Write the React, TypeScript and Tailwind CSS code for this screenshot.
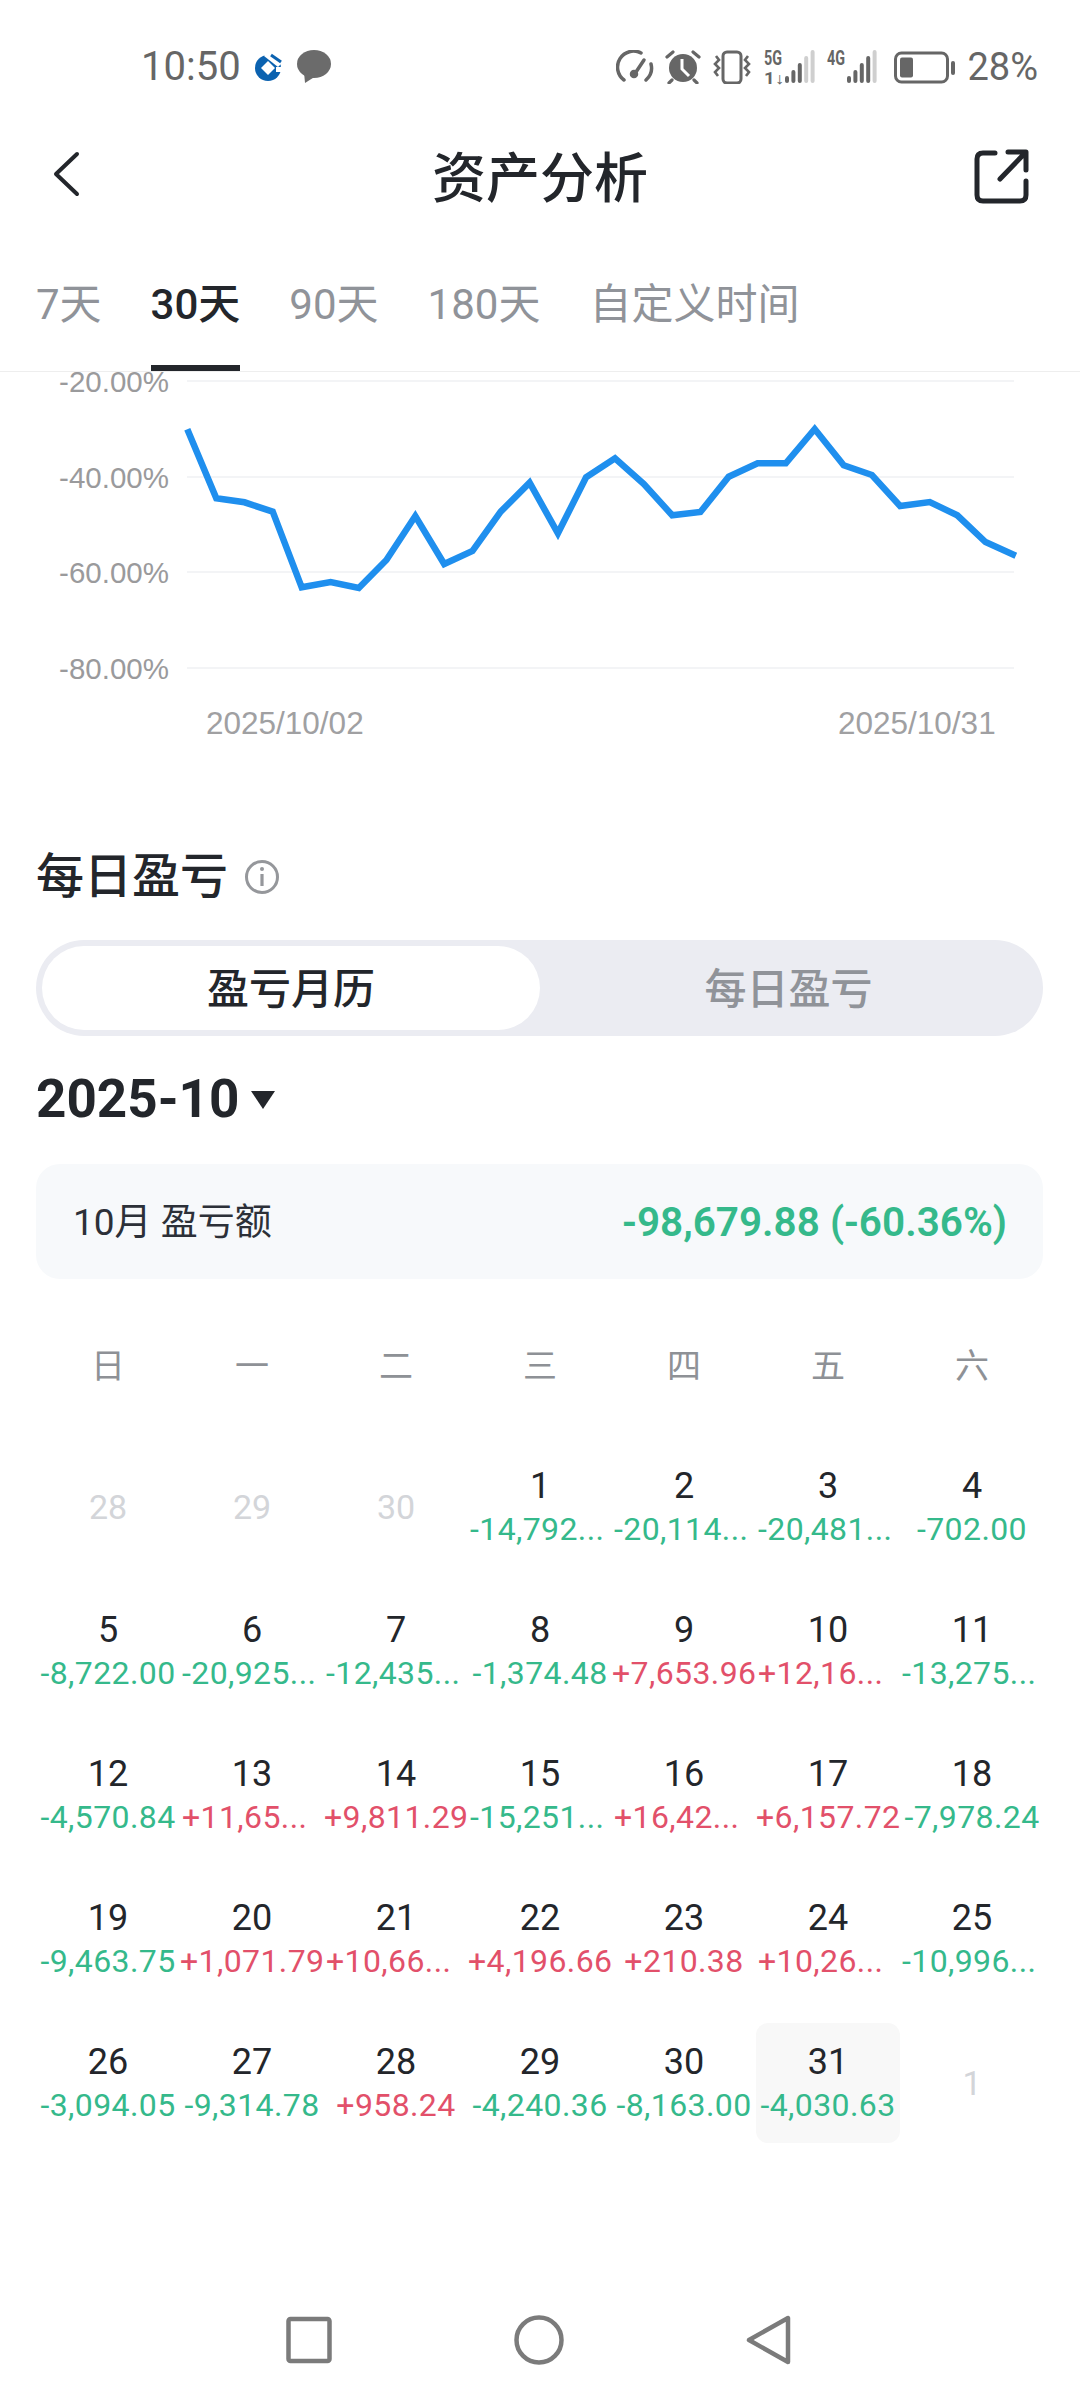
import React from "react";

const CJK = "font-['Roboto','Noto_Sans_CJK_SC',sans-serif]";

const pts: [number, number][] = [
  [272, 208], [314, 415], [355, 427], [396, 455], [438, 682], [480, 666], [521, 684], [561, 600], [603, 468], [645, 612],
  [686, 573], [727, 455], [769, 368], [810, 520], [851, 352], [893, 295], [935, 372], [976, 466], [1017, 456], [1058, 350],
  [1100, 310], [1141, 310], [1183, 207], [1225, 316], [1266, 345], [1307, 438], [1350, 426], [1390, 466], [1431, 546], [1475, 587],
];
const linePoints = pts.map(([u, v]) => `${(u / 1.452).toFixed(1)},${(v / 3 - 12).toFixed(1)}`).join(" ");

function Chart() {
  const grid = [
    { y: 9, t: "-20.00%" },
    { y: 105, t: "-40.00%" },
    { y: 200, t: "-60.00%" },
    { y: 296, t: "-80.00%" },
  ];
  return (
    <svg width="1080" height="400" viewBox="0 0 1080 400" className="block overflow-visible">
      {grid.map((g) => (
        <g key={g.y}>
          <line x1="187" x2="1014" y1={g.y} y2={g.y} stroke="#f3f4f6" strokeWidth="2" />
          <text x="169" y={g.y + 11} textAnchor="end" fontFamily="Liberation Sans, sans-serif" fontSize="29.5" fill="#9a9a9c">
            {g.t}
          </text>
        </g>
      ))}
      <polyline points={linePoints} fill="none" stroke="#1f8fee" strokeWidth="6.5" strokeLinejoin="miter" />
      <text x="206" y="362" fontFamily="Liberation Sans, sans-serif" fontSize="31.5" fill="#a0a0a2">2025/10/02</text>
      <text x="838" y="362" fontFamily="Liberation Sans, sans-serif" fontSize="31.5" fill="#a0a0a2">2025/10/31</text>
    </svg>
  );
}

function Bars({ grey, x0 }: { grey: number; x0: number }) {
  const hs = [7, 13, 20, 27, 33];
  return (
    <>
      {hs.map((h, i) => (
        <rect key={i} x={x0 + i * 6.4} y={33 - h} width="4" height={h} rx="2" fill={i >= 5 - grey ? "#cfcfcf" : "#666"} />
      ))}
    </>
  );
}

function StatusIcons() {
  return (
    <div className="flex items-center">
      <svg width="38" height="34" viewBox="0 0 38 34" fill="none" stroke="#666" strokeWidth="3.5" strokeLinecap="round">
        <path d="M8 30 A16 16 0 0 1 25 3" />
        <path d="M35 14 A16 16 0 0 1 30 30" />
        <path d="M28 10 L20 22" />
        <circle cx="18" cy="24" r="2.5" fill="#666" />
      </svg>
      <svg width="36" height="34" viewBox="0 0 36 34" className="ml-[11px]">
        <circle cx="18" cy="18" r="14" fill="#666" />
        <path d="M17 9 V19 L24 26" stroke="#fff" strokeWidth="3" fill="none" />
        <path d="M2 7 L8 2 M34 7 L28 2 M7 30 L4 33 M29 30 L32 33" stroke="#666" strokeWidth="3.2" strokeLinecap="round" />
      </svg>
      <svg width="40" height="34" viewBox="0 0 40 34" fill="none" stroke="#666" className="ml-[11px]">
        <rect x="11" y="2" width="18" height="31" rx="4" strokeWidth="3" />
        <path d="M4 6 L7 10 L3 14 L7 18 L3 22 L6 26" strokeWidth="2.6" />
        <path d="M36 6 L33 10 L37 14 L33 18 L37 22 L34 26" strokeWidth="2.6" />
      </svg>
      <svg width="53" height="34" viewBox="0 0 53 34" className="ml-[12px] overflow-visible">
        <text x="0" y="15" fontFamily="Roboto, sans-serif" fontWeight="700" fontSize="20" fill="#666" textLength="18" lengthAdjust="spacingAndGlyphs">5G</text>
        <text x="0" y="34" fontFamily="Roboto, sans-serif" fontWeight="700" fontSize="16" fill="#666" textLength="20" lengthAdjust="spacingAndGlyphs">1↓</text>
        <Bars grey={2} x0={21} />
      </svg>
      <svg width="54" height="34" viewBox="0 0 54 34" className="ml-[10px] overflow-visible">
        <text x="0" y="15" fontFamily="Roboto, sans-serif" fontWeight="700" fontSize="20" fill="#666" textLength="18" lengthAdjust="spacingAndGlyphs">4G</text>
        <Bars grey={1} x0={20} />
      </svg>
      <svg width="62" height="34" viewBox="0 0 62 34" className="ml-[13px]">
        <rect x="1.5" y="3" width="52" height="29" rx="6" fill="none" stroke="#666" strokeWidth="3" />
        <rect x="6" y="7.5" width="13" height="20" rx="2" fill="#666" />
        <rect x="57" y="11" width="4" height="14" rx="2" fill="#666" />
      </svg>
      <span className="ml-[11px] text-[38px] leading-none text-[#666] font-['Roboto',sans-serif]">28%</span>
    </div>
  );
}

function StatusBar() {
  return (
    <div className="flex h-[132px] items-center justify-between pl-[141px] pr-[42px] pt-[2px]">
      <div className="flex items-center">
        <span className="text-[40px] leading-none text-[#666] font-['Roboto',sans-serif]">10:50</span>
        <svg width="28" height="30" viewBox="0 0 28 30" className="ml-[13px]">
          <circle cx="14" cy="16" r="13" fill="#0b62b0" />
          <path d="M14 9 L21 16 L14 23 L7 16 Z" fill="#fff" />
          <path d="M13 0 L28 11 L24 15 L10 4 Z" fill="#fff" />
          <path d="M17 3 L27 10" stroke="#0b62b0" strokeWidth="3" />
          <path d="M22 15 H28 V20 H22 Z" fill="#fff" />
        </svg>
        <svg width="36" height="34" viewBox="0 0 36 34" className="ml-[14px]">
          <ellipse cx="18" cy="14" rx="17" ry="14" fill="#6b6b6b" />
          <path d="M8 22 L9 33 L20 26 Z" fill="#6b6b6b" />
        </svg>
      </div>
      <StatusIcons />
    </div>
  );
}

function NavBar() {
  return (
    <div className="flex h-[92px] items-center pl-[52px] pr-[49px]">
      <div className="flex flex-1 items-center">
        <svg width="28" height="46" viewBox="0 0 28 46" fill="none" stroke="#23262b" strokeWidth="4" strokeLinecap="round" strokeLinejoin="round" className="mt-[-8px]">
          <path d="M25 3 L4 23 L25 43" />
        </svg>
      </div>
      <span className="ml-[-3px] pt-[4px] text-[54px] font-medium leading-none text-[#23262b]">资产分析</span>
      <div className="flex flex-1 items-center justify-end">
        <svg width="58" height="58" viewBox="0 0 58 58" fill="none" stroke="#23262b" strokeWidth="5" strokeLinecap="round" strokeLinejoin="round" className="mt-[-2px]">
          <path d="M22 5 H10 Q4 5 4 11 V47 Q4 53 10 53 H47 Q53 53 53 47 V33" />
          <path d="M27 31 L52 5 M35 4 H53 V22" />
        </svg>
      </div>
    </div>
  );
}

function Tabs() {
  const tabs = ["7天", "30天", "90天", "180天", "自定义时间"];
  return (
    <div className="flex h-[148px] gap-[49px] border-b border-[#eeeeee] pl-[36px]">
      {tabs.map((t, i) => (
        <div
          key={t}
          className={
            i === 1
              ? "h-[147px] border-b-[6px] border-[#23262b] pt-[56px] text-[42px] font-medium leading-[50px] text-[#23262b]"
              : "h-[147px] pt-[56px] text-[42px] leading-[50px] text-[#909399]"
          }
        >
          {t}
        </div>
      ))}
    </div>
  );
}

type Cell = { d: string; v?: string; off?: boolean; sel?: boolean };
const c = (d: number, v: string, sel = false): Cell => ({ d: String(d), v, sel });
const off = (d: number): Cell => ({ d: String(d), off: true });

const cells: Cell[] = [
  off(28), off(29), off(30), c(1, "-14,792..."), c(2, "-20,114..."), c(3, "-20,481..."), c(4, "-702.00"),
  c(5, "-8,722.00"), c(6, "-20,925..."), c(7, "-12,435..."), c(8, "-1,374.48"), c(9, "+7,653.96"), c(10, "+12,16..."), c(11, "-13,275..."),
  c(12, "-4,570.84"), c(13, "+11,65..."), c(14, "+9,811.29"), c(15, "-15,251..."), c(16, "+16,42..."), c(17, "+6,157.72"), c(18, "-7,978.24"),
  c(19, "-9,463.75"), c(20, "+1,071.79"), c(21, "+10,66..."), c(22, "+4,196.66"), c(23, "+210.38"), c(24, "+10,26..."), c(25, "-10,996..."),
  c(26, "-3,094.05"), c(27, "-9,314.78"), c(28, "+958.24"), c(29, "-4,240.36"), c(30, "-8,163.00"), c(31, "-4,030.63", true), off(1),
];

function DayCell({ cell }: { cell: Cell }) {
  if (cell.off) {
    return (
      <div className="flex h-[120px] items-center justify-center text-[34px] text-[#d3d5d9]">{cell.d}</div>
    );
  }
  const pos = cell.v!.startsWith("+");
  const cut = cell.v!.endsWith("...");
  return (
    <div className={cell.sel ? "flex h-[120px] flex-col justify-center rounded-[12px] bg-[#f8f8f8]" : "flex h-[120px] flex-col justify-center"}>
      <div className="h-[44px] pt-[1px] text-center text-[36px] leading-[44px] text-[#23262b]">{cell.d}</div>
      <div
        className={
          (cut ? "pl-[2px] text-left " : "text-center ") +
          (pos ? "text-[#e2506a] " : "text-[#35b98b] ") +
          "h-[44px] whitespace-nowrap text-[32px] leading-[44px] tracking-[0.4px]"
        }
      >
        {cell.v}
      </div>
    </div>
  );
}

export default function App() {
  return (
    <div className={"h-[2400px] w-[1080px] overflow-hidden bg-white " + CJK}>
      <StatusBar />
      <NavBar />
      <Tabs />
      <Chart />

      <div className="mt-[73px] px-[36px]">
        <div className="flex h-[64px] items-center">
          <span className="text-[48px] font-medium leading-none text-[#23262b]">每日盈亏</span>
          <svg width="36" height="36" viewBox="0 0 36 36" fill="none" stroke="#95979b" strokeWidth="3" className="ml-[16px]">
            <circle cx="18" cy="18" r="15.5" />
            <path d="M18 15 V27" strokeWidth="3.2" />
            <circle cx="18" cy="10" r="2" fill="#95979b" stroke="none" />
          </svg>
        </div>

        <div className="mt-[31px] flex h-[96px] w-[1007px] rounded-full bg-[#ebecf2] p-[6px]">
          <div className="flex w-[498px] items-center justify-center rounded-full bg-white pt-[2px] text-[42px] font-medium text-[#23262b]">
            盈亏月历
          </div>
          <div className="flex flex-1 items-center justify-center pt-[2px] text-[42px] font-medium text-[#909399]">每日盈亏</div>
        </div>

        <div className="mt-[32px] flex h-[60px] items-center pt-[3px]">
          <span className="text-[53px] font-bold leading-none text-[#23262b]">2025-10</span>
          <svg width="24" height="18" viewBox="0 0 24 18" className="ml-[12px]">
            <path d="M0 0 H24 L12 18 Z" fill="#23262b" />
          </svg>
        </div>

        <div className="mt-[36px] flex h-[115px] w-[1007px] items-center justify-between rounded-[24px] bg-[#f7f9fb] pl-[37px] pr-[36px]">
          <span className="pt-[2px] text-[37px] leading-none text-[#2c3038]">10月 盈亏额</span>
          <span className="pt-[2px] text-[40.5px] font-semibold leading-none text-[#35b98b]">-98,679.88 (-60.36%)</span>
        </div>

        <div className="mt-[62px] grid h-[50px] grid-cols-7 text-center text-[34px] leading-[50px] text-[#8e9196]">
          {["日", "一", "二", "三", "四", "五", "六"].map((w) => (
            <div key={w}>{w}</div>
          ))}
        </div>

        <div className="mt-[56px] grid grid-cols-[repeat(7,144px)] gap-y-[24px]">
          {cells.map((cell, i) => (
            <DayCell key={i} cell={cell} />
          ))}
        </div>
      </div>

      <div className="mt-[167px] flex h-[60px] items-center justify-center gap-[182px] pr-[2px]">
        <svg width="46" height="48" viewBox="0 0 46 48" fill="none" stroke="#7b7b7b" strokeWidth="4.5" strokeLinejoin="round">
          <rect x="2.5" y="3" width="41" height="42" rx="2" />
        </svg>
        <svg width="50" height="50" viewBox="0 0 50 50" fill="none" stroke="#7b7b7b" strokeWidth="4.5">
          <circle cx="25" cy="25" r="22.5" />
        </svg>
        <svg width="46" height="50" viewBox="0 0 46 50" fill="none" stroke="#7b7b7b" strokeWidth="4.5" strokeLinejoin="round">
          <path d="M42 3 V47 L3 25 Z" />
        </svg>
      </div>
    </div>
  );
}
